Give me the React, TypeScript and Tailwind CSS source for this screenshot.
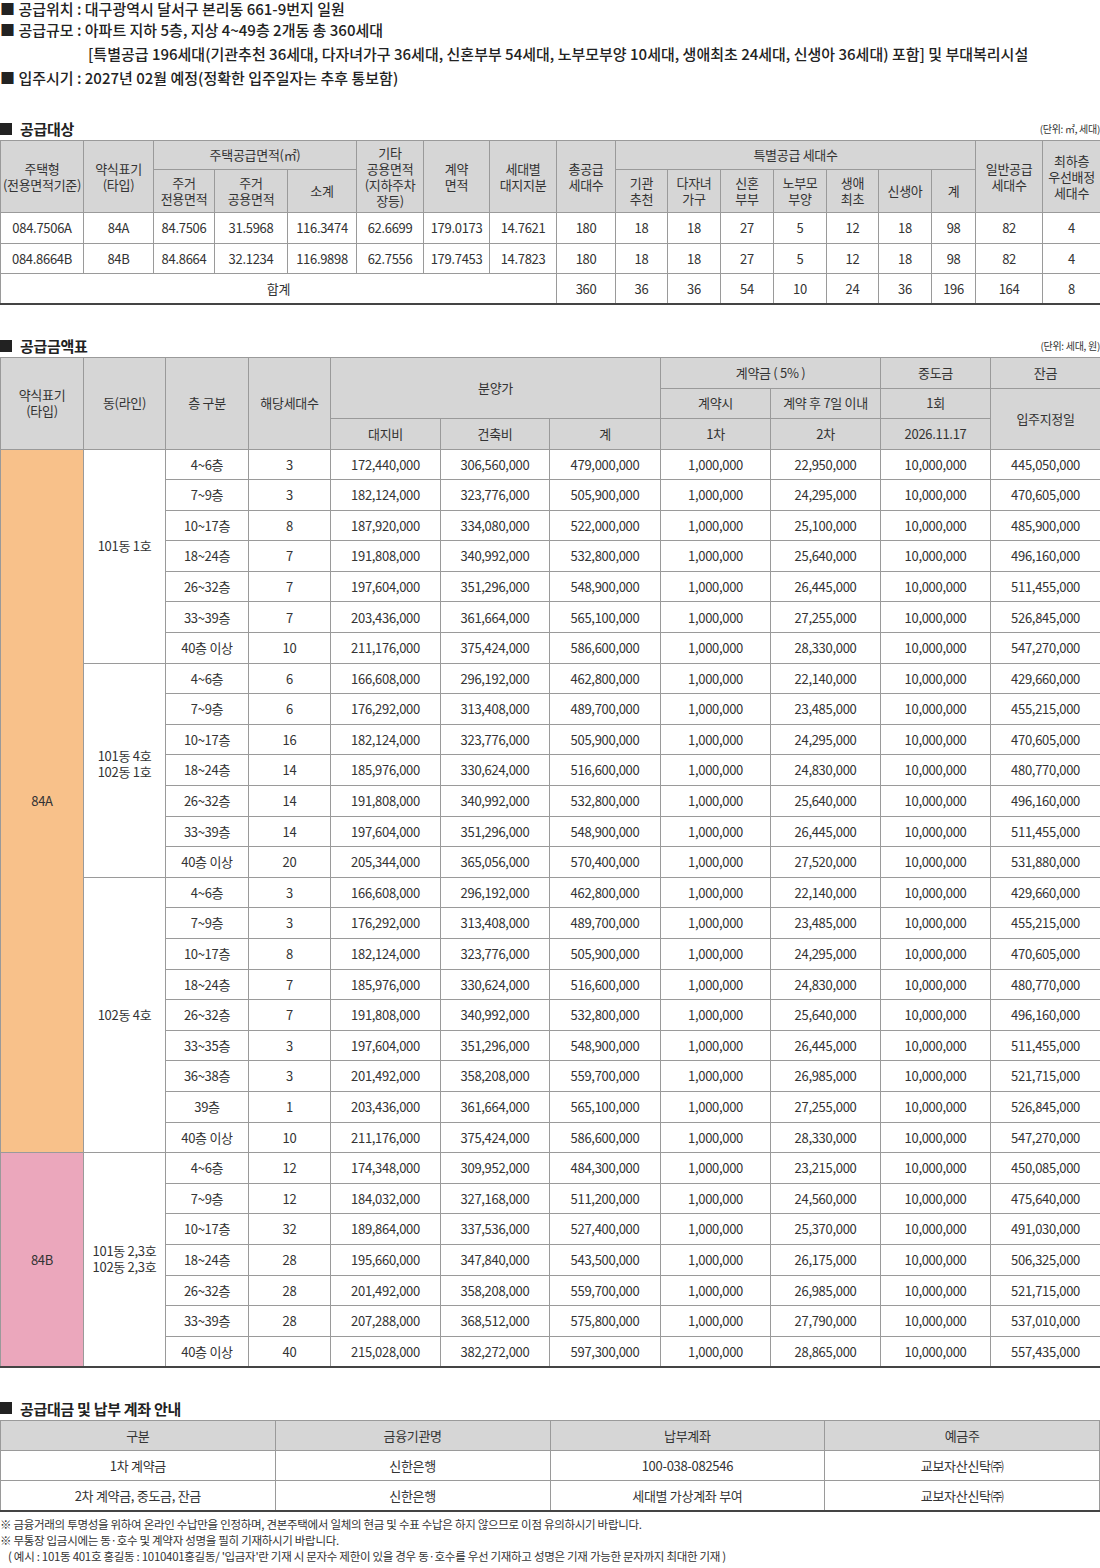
import React from "react";

const B = "border border-[#9a9a9a]";
const H = `${B} bg-[#d6d6d6] font-normal`;
const T = `${B} text-center`;

const rowsA1 = [
  ["4~6층","3","172,440,000","306,560,000","479,000,000","1,000,000","22,950,000","10,000,000","445,050,000"],
  ["7~9층","3","182,124,000","323,776,000","505,900,000","1,000,000","24,295,000","10,000,000","470,605,000"],
  ["10~17층","8","187,920,000","334,080,000","522,000,000","1,000,000","25,100,000","10,000,000","485,900,000"],
  ["18~24층","7","191,808,000","340,992,000","532,800,000","1,000,000","25,640,000","10,000,000","496,160,000"],
  ["26~32층","7","197,604,000","351,296,000","548,900,000","1,000,000","26,445,000","10,000,000","511,455,000"],
  ["33~39층","7","203,436,000","361,664,000","565,100,000","1,000,000","27,255,000","10,000,000","526,845,000"],
  ["40층 이상","10","211,176,000","375,424,000","586,600,000","1,000,000","28,330,000","10,000,000","547,270,000"],
];
const rowsA2 = [
  ["4~6층","6","166,608,000","296,192,000","462,800,000","1,000,000","22,140,000","10,000,000","429,660,000"],
  ["7~9층","6","176,292,000","313,408,000","489,700,000","1,000,000","23,485,000","10,000,000","455,215,000"],
  ["10~17층","16","182,124,000","323,776,000","505,900,000","1,000,000","24,295,000","10,000,000","470,605,000"],
  ["18~24층","14","185,976,000","330,624,000","516,600,000","1,000,000","24,830,000","10,000,000","480,770,000"],
  ["26~32층","14","191,808,000","340,992,000","532,800,000","1,000,000","25,640,000","10,000,000","496,160,000"],
  ["33~39층","14","197,604,000","351,296,000","548,900,000","1,000,000","26,445,000","10,000,000","511,455,000"],
  ["40층 이상","20","205,344,000","365,056,000","570,400,000","1,000,000","27,520,000","10,000,000","531,880,000"],
];
const rowsA3 = [
  ["4~6층","3","166,608,000","296,192,000","462,800,000","1,000,000","22,140,000","10,000,000","429,660,000"],
  ["7~9층","3","176,292,000","313,408,000","489,700,000","1,000,000","23,485,000","10,000,000","455,215,000"],
  ["10~17층","8","182,124,000","323,776,000","505,900,000","1,000,000","24,295,000","10,000,000","470,605,000"],
  ["18~24층","7","185,976,000","330,624,000","516,600,000","1,000,000","24,830,000","10,000,000","480,770,000"],
  ["26~32층","7","191,808,000","340,992,000","532,800,000","1,000,000","25,640,000","10,000,000","496,160,000"],
  ["33~35층","3","197,604,000","351,296,000","548,900,000","1,000,000","26,445,000","10,000,000","511,455,000"],
  ["36~38층","3","201,492,000","358,208,000","559,700,000","1,000,000","26,985,000","10,000,000","521,715,000"],
  ["39층","1","203,436,000","361,664,000","565,100,000","1,000,000","27,255,000","10,000,000","526,845,000"],
  ["40층 이상","10","211,176,000","375,424,000","586,600,000","1,000,000","28,330,000","10,000,000","547,270,000"],
];
const rowsB = [
  ["4~6층","12","174,348,000","309,952,000","484,300,000","1,000,000","23,215,000","10,000,000","450,085,000"],
  ["7~9층","12","184,032,000","327,168,000","511,200,000","1,000,000","24,560,000","10,000,000","475,640,000"],
  ["10~17층","32","189,864,000","337,536,000","527,400,000","1,000,000","25,370,000","10,000,000","491,030,000"],
  ["18~24층","28","195,660,000","347,840,000","543,500,000","1,000,000","26,175,000","10,000,000","506,325,000"],
  ["26~32층","28","201,492,000","358,208,000","559,700,000","1,000,000","26,985,000","10,000,000","521,715,000"],
  ["33~39층","28","207,288,000","368,512,000","575,800,000","1,000,000","27,790,000","10,000,000","537,010,000"],
  ["40층 이상","40","215,028,000","382,272,000","597,300,000","1,000,000","28,865,000","10,000,000","557,435,000"],
];

function Title({ t, unit }: { t: string; unit?: string }) {
  return (
    <div className="flex items-end justify-between h-[22px] mb-[4px]">
      <div className="text-[15px] font-bold text-[#222] leading-none flex items-center gap-[8px]">
        <span className="inline-block w-[12px] h-[12px] bg-[#222]" />
        {t}
      </div>
      {unit && <div className="text-[10px] text-[#333]">{unit}</div>}
    </div>
  );
}

function Rows({ rows }: { rows: string[][] }) {
  return (
    <>
      {rows.map((r, i) => (
        <tr key={i} className="h-[30.6px]">{r.map((c, j) => <td key={j} className={T}>{c}</td>)}</tr>
      ))}
    </>
  );
}

export default function App() {
  return (
    <div className="w-[1100px] bg-white text-[#333] text-[13px] tracking-[-0.3px]" style={{ fontFamily: '"Noto Sans CJK KR", "Noto Sans", sans-serif' }}>
      <div className="text-[15px] font-medium leading-[24px] text-[#222] tracking-normal">
        <div className="leading-[18px]">■ 공급위치 : 대구광역시 달서구 본리동 661-9번지 일원</div>
        <div>■ 공급규모 : 아파트 지하 5층, 지상 4~49층 2개동 총 360세대</div>
        <div className="pl-[88px]">[특별공급 196세대(기관추천 36세대, 다자녀가구 36세대, 신혼부부 54세대, 노부모부양 10세대, 생애최초 24세대, 신생아 36세대) 포함] 및 부대복리시설</div>
        <div>■ 입주시기 : 2027년 02월 예정(정확한 입주일자는 추후 통보함)</div>
      </div>

      <div className="mt-[24px]">
        <Title t="공급대상" unit="(단위: ㎡, 세대)" />
        <table className="w-full border-collapse table-fixed border-b-2 border-b-[#444]">
          <colgroup>
            {[83,70,61,73,69,67,66,67,59,52,53,53,53,52,53,44,67,58].map((w, i) => <col key={i} style={{ width: w }} />)}
          </colgroup>
          <thead className="leading-[16px]">
            <tr className="h-[29px]">
              <th rowSpan={2} className={H}>주택형<br />(전용면적기준)</th>
              <th rowSpan={2} className={H}>약식표기<br />(타입)</th>
              <th colSpan={3} className={H}>주택공급면적(㎡)</th>
              <th rowSpan={2} className={H}>기타<br />공용면적<br />(지하주차<br />장등)</th>
              <th rowSpan={2} className={H}>계약<br />면적</th>
              <th rowSpan={2} className={H}>세대별<br />대지지분</th>
              <th rowSpan={2} className={H}>총공급<br />세대수</th>
              <th colSpan={7} className={H}>특별공급 세대수</th>
              <th rowSpan={2} className={H}>일반공급<br />세대수</th>
              <th rowSpan={2} className={H}>최하층<br />우선배정<br />세대수</th>
            </tr>
            <tr className="h-[43px]">
              <th className={H}>주거<br />전용면적</th>
              <th className={H}>주거<br />공용면적</th>
              <th className={H}>소계</th>
              <th className={H}>기관<br />추천</th>
              <th className={H}>다자녀<br />가구</th>
              <th className={H}>신혼<br />부부</th>
              <th className={H}>노부모<br />부양</th>
              <th className={H}>생애<br />최초</th>
              <th className={H}>신생아</th>
              <th className={H}>계</th>
            </tr>
          </thead>
          <tbody>
            {[
              ["084.7506A","84A","84.7506","31.5968","116.3474","62.6699","179.0173","14.7621","180","18","18","27","5","12","18","98","82","4"],
              ["084.8664B","84B","84.8664","32.1234","116.9898","62.7556","179.7453","14.7823","180","18","18","27","5","12","18","98","82","4"],
            ].map((r, i) => (
              <tr key={i} className="h-[30.5px]">{r.map((c, j) => <td key={j} className={T}>{c}</td>)}</tr>
            ))}
            <tr className="h-[30.5px]">
              <td colSpan={8} className={T}>합계</td>
              {["360","36","36","54","10","24","36","196","164","8"].map((c, j) => <td key={j} className={T}>{c}</td>)}
            </tr>
          </tbody>
        </table>
      </div>

      <div className="mt-[26px]">
        <Title t="공급금액표" unit="(단위: 세대, 원)" />
        <table className="w-full border-collapse table-fixed border-b-2 border-b-[#444]">
          <colgroup>
            {[83,82,83,82,110,109,111,110,110,110,110].map((w, i) => <col key={i} style={{ width: w }} />)}
          </colgroup>
          <thead className="leading-[16px]">
            <tr className="h-[30.5px]">
              <th rowSpan={3} className={H}>약식표기<br />(타입)</th>
              <th rowSpan={3} className={H}>동(라인)</th>
              <th rowSpan={3} className={H}>층 구분</th>
              <th rowSpan={3} className={H}>해당세대수</th>
              <th rowSpan={2} colSpan={3} className={H}>분양가</th>
              <th colSpan={2} className={H}>계약금 ( 5% )</th>
              <th className={H}>중도금</th>
              <th className={H}>잔금</th>
            </tr>
            <tr className="h-[30.5px]">
              <th className={H}>계약시</th>
              <th className={H}>계약 후 7일 이내</th>
              <th className={H}>1회</th>
              <th rowSpan={2} className={H}>입주지정일</th>
            </tr>
            <tr className="h-[30.5px]">
              <th className={H}>대지비</th>
              <th className={H}>건축비</th>
              <th className={H}>계</th>
              <th className={H}>1차</th>
              <th className={H}>2차</th>
              <th className={H}>2026.11.17</th>
            </tr>
          </thead>
          <tbody>
            <tr className="h-[30.6px]">
              <td rowSpan={23} className={`${T} bg-[#f8c18a]`}>84A</td>
              <td rowSpan={7} className={`${T} align-middle`}><span className="block -mt-[20px]">101동 1호</span></td>
              {rowsA1[0].map((c, j) => <td key={j} className={T}>{c}</td>)}
            </tr>
            <Rows rows={rowsA1.slice(1)} />
            <tr className="h-[30.6px]">
              <td rowSpan={7} className={`${T} leading-[16px]`}><span className="block -mt-[12px]">101동 4호<br />102동 1호</span></td>
              {rowsA2[0].map((c, j) => <td key={j} className={T}>{c}</td>)}
            </tr>
            <Rows rows={rowsA2.slice(1)} />
            <tr className="h-[30.6px]">
              <td rowSpan={9} className={T}>102동 4호</td>
              {rowsA3[0].map((c, j) => <td key={j} className={T}>{c}</td>)}
            </tr>
            <Rows rows={rowsA3.slice(1)} />
            <tr className="h-[30.6px]">
              <td rowSpan={7} className={`${T} bg-[#eba7bc]`}>84B</td>
              <td rowSpan={7} className={`${T} leading-[16px]`}>101동 2,3호<br />102동 2,3호</td>
              {rowsB[0].map((c, j) => <td key={j} className={T}>{c}</td>)}
            </tr>
            <Rows rows={rowsB.slice(1)} />
          </tbody>
        </table>
      </div>

      <div className="mt-[26px]">
        <Title t="공급대금 및 납부 계좌 안내" />
        <table className="w-full border-collapse table-fixed border-b-2 border-b-[#444]">
          <thead>
            <tr className="h-[30px]">
              {["구분","금융기관명","납부계좌","예금주"].map((c) => <th key={c} className={H}>{c}</th>)}
            </tr>
          </thead>
          <tbody>
            <tr className="h-[30.5px]">{["1차 계약금","신한은행","100-038-082546","교보자산신탁㈜"].map((c) => <td key={c} className={T}>{c}</td>)}</tr>
            <tr className="h-[30.5px]">{["2차 계약금, 중도금, 잔금","신한은행","세대별 가상계좌 부여","교보자산신탁㈜"].map((c) => <td key={c} className={T}>{c}</td>)}</tr>
          </tbody>
        </table>
        <div className="text-[11.5px] leading-[16px] mt-[4px] text-[#333]">
          <div>※ 금융거래의 투명성을 위하여 온라인 수납만을 인정하며, 견본주택에서 일체의 현금 및 수표 수납은 하지 않으므로 이점 유의하시기 바랍니다.</div>
          <div>※ 무통장 입금시에는 동·호수 및 계약자 성명을 필히 기재하시기 바랍니다.</div>
          <div className="pl-[8px]">( 예시 : 101동 401호 홍길동 : 1010401홍길동/ '입금자'란 기재 시 문자수 제한이 있을 경우 동·호수를 우선 기재하고 성명은 기재 가능한 문자까지 최대한 기재 )</div>
        </div>
      </div>
    </div>
  );
}
